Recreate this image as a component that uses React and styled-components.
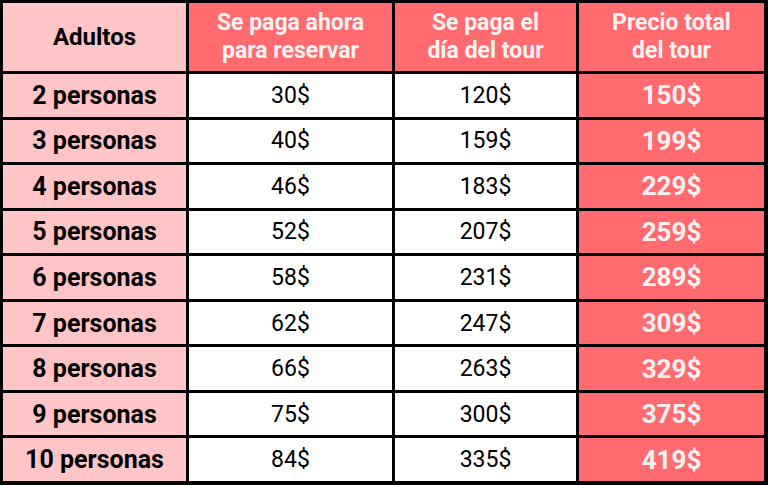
import React from 'react';
import styled, { createGlobalStyle } from 'styled-components';

const GlobalStyle = createGlobalStyle`
  html, body {
    margin: 0;
    padding: 0;
    background: #fff;
  }
  body {
    font-family: Roboto, "Liberation Sans", Arial, sans-serif;
  }
`;

const Table = styled.div`
  display: grid;
  grid-template-columns: 183px 203px 181px 185px;
  grid-template-rows: 68px repeat(9, 1fr);
  gap: 3px;
  padding: 3px 4px 4px 3px;
  width: 768px;
  height: 485px;
  box-sizing: border-box;
  background: #000;
`;

const Cell = styled.div`
  display: flex;
  align-items: center;
  justify-content: center;
  text-align: center;
  background: ${p => (p.$tone === 'pink' ? '#ffc4c5' : p.$tone === 'red' ? '#ff6b6e' : '#fff')};
  color: ${p => (p.$tone === 'red' ? '#f7f2f2' : '#000')};
`;

const HeadCell = styled(Cell)`
  font-size: ${p => (p.$big ? '24px' : '23px')};
  font-weight: 700;
  line-height: 28px;
  padding-bottom: 1px;
`;

const RowLabel = styled(Cell)`
  font-size: 25px;
  font-weight: 700;
`;

const Amount = styled(Cell)`
  font-size: 23px;
  font-weight: 400;
`;

const Total = styled(Cell)`
  font-size: 26px;
  font-weight: 700;
`;

const rows = [
  [2, 30, 120, 150],
  [3, 40, 159, 199],
  [4, 46, 183, 229],
  [5, 52, 207, 259],
  [6, 58, 231, 289],
  [7, 62, 247, 309],
  [8, 66, 263, 329],
  [9, 75, 300, 375],
  [10, 84, 335, 419],
];

export default function App() {
  return (
    <>
      <GlobalStyle />
      <Table>
        <HeadCell $tone="pink" $big>Adultos</HeadCell>
        <HeadCell $tone="red">Se paga ahora<br />para reservar</HeadCell>
        <HeadCell $tone="red">Se paga el<br />día del tour</HeadCell>
        <HeadCell $tone="red">Precio total<br />del tour</HeadCell>
        {rows.map(([n, now, day, total]) => (
          <React.Fragment key={n}>
            <RowLabel $tone="pink">{n} personas</RowLabel>
            <Amount>{now}$</Amount>
            <Amount>{day}$</Amount>
            <Total $tone="red">{total}$</Total>
          </React.Fragment>
        ))}
      </Table>
    </>
  );
}
